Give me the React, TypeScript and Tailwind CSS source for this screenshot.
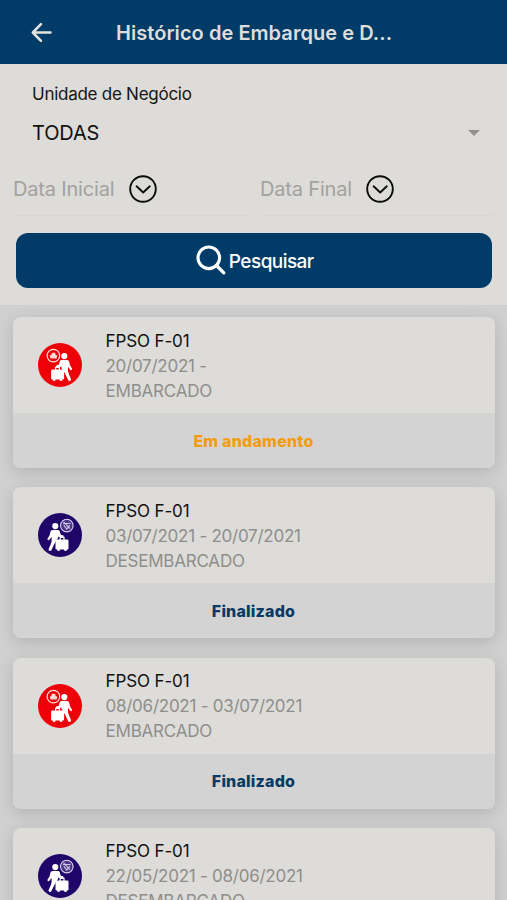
interface Trip {
  unit: string;
  period: string;
  type: 'EMBARCADO' | 'DESEMBARCADO';
  status: string;
}

const trips: Trip[] = [
  { unit: 'FPSO F-01', period: '20/07/2021 -', type: 'EMBARCADO', status: 'Em andamento' },
  { unit: 'FPSO F-01', period: '03/07/2021 - 20/07/2021', type: 'DESEMBARCADO', status: 'Finalizado' },
  { unit: 'FPSO F-01', period: '08/06/2021 - 03/07/2021', type: 'EMBARCADO', status: 'Finalizado' },
  { unit: 'FPSO F-01', period: '22/05/2021 - 08/06/2021', type: 'DESEMBARCADO', status: 'Finalizado' },
];

function Traveler() {
  return (
    <g>
      <circle cx="26.3" cy="13.1" r="3.1" fill="#fff" />
      <path
        d="M23.6 17h5.4c1.2 0 1.9.7 2.2 1.8l.9 3.7 1.9 3.1c.6 1.3-.9 2.3-1.8 1.2l-2.2-3.1v4.6l1 3.2 2 4.5c.6 1.9-2 2.8-2.9 1.1l-2.6-5.6-2.3-4.2-1.7-2.3v-1.6l-1.8.9h-2.8c-1.3 0-1.4-2 0-2.1l1.9-.4.9-3.1c.3-1 .9-1.7 1.9-1.7z"
        fill="#fff"
      />
      <path d="M17.6 27.4v-3h3.8v3" fill="none" stroke="#fff" strokeWidth="1.2" />
      <rect x="13.1" y="26.6" width="13" height="9.9" rx="1.3" fill="#fff" />
      <circle cx="16.1" cy="36.7" r="1.4" fill="#fff" />
      <circle cx="23" cy="36.7" r="1.4" fill="#fff" />
    </g>
  );
}

function TripIcon({ type }: { type: Trip['type'] }) {
  if (type === 'EMBARCADO') {
    return (
      <svg className="size-11 shrink-0" viewBox="0 0 44 44">
        <circle cx="22" cy="22" r="22" fill="#ee0009" />
        <circle cx="15.4" cy="12.6" r="6.3" fill="none" stroke="#ffe3df" strokeWidth="1.2" />
        <path d="M11.7 12.2h7.6l-.7 3.2h-6.2zM13.2 12.2l.7-2.4h3.2l.7 2.4z" fill="#ffd9d4" />
        <Traveler />
      </svg>
    );
  }

  return (
    <svg className="size-11 shrink-0" viewBox="0 0 44 44">
      <circle cx="22" cy="22" r="22" fill="#200569" />
      <circle cx="28.8" cy="12.6" r="6.3" fill="#4b3585" stroke="#ddd5f1" strokeWidth="1.1" />
      <path d="M25 10.5h7.6M25.8 12.2l3 3.9 3-3.9M25.6 8.9l6.4 6.8" fill="none" stroke="#cfc5ea" strokeWidth="1.1" />
      <g transform="matrix(-1 0 0 1 43.6 0)">
        <Traveler />
      </g>
    </svg>
  );
}

function ChevronCircle() {
  return (
    <svg className="size-7" viewBox="0 0 28 28" fill="none" stroke="#0c0c0c" strokeWidth="1.9">
      <circle cx="14" cy="14" r="12.8" />
      <path d="M7.6 11.3l6.6 6.2 6.6-6.2" strokeLinecap="round" strokeLinejoin="round" />
    </svg>
  );
}

function TripCard({ trip }: { trip: Trip }) {
  return (
    <div className="h-[151px] shrink-0 overflow-hidden rounded-lg bg-[#dddcd8] shadow-[0_4px_16px_rgba(0,0,0,0.14)]">
      <div className="flex h-24 items-center pl-[25px]">
        <TripIcon type={trip.type} />
        <div className="ml-[24px]">
          <p className="text-[17px] leading-[26px] tracking-[-0.12px] text-[#111]">{trip.unit}</p>
          <p className="text-[17px] leading-[25px] tracking-[-0.25px] text-[#8e8e8d]">{trip.period}</p>
          <p className="text-[17px] leading-[24px] tracking-[-0.22px] text-[#8e8e8d]">{trip.type}</p>
        </div>
      </div>
      <div className="flex h-[55px] items-center justify-center bg-[#d3d3d3]">
        <span
          className={`text-base font-extrabold tracking-[0.2px] ${trip.status === 'Finalizado' ? 'text-[#073b66]' : 'text-[#f39c12]'}`}
        >
          {trip.status}
        </span>
      </div>
    </div>
  );
}

export default function App() {
  return (
    <div className="flex h-[900px] w-[507px] flex-col overflow-hidden bg-[#d0d0d1] font-['Inter',sans-serif]">
      <header className="flex h-16 shrink-0 items-center bg-[#003c67] pl-[31px]">
        <svg className="size-[21px]" viewBox="0 0 20 20" fill="none" stroke="#e4e3e0" strokeWidth="2.4">
          <path d="M18.6 10H1.8M9.5 2L1.7 10l7.8 8" strokeLinecap="round" strokeLinejoin="round" />
        </svg>
        <h1 className="ml-16 whitespace-nowrap pt-px text-xl font-semibold tracking-[0.05px] text-[#dedddb]">
          Histórico de Embarque e D...
        </h1>
      </header>

      <section className="h-[241px] shrink-0 bg-[#dddcd8]">
        <div className="px-8 pt-[18px]">
          <p className="text-[17px] leading-6 tracking-[-0.26px] text-[#151515]">Unidade de Negócio</p>
          <div className="mt-[11px] flex items-center justify-between">
            <span className="text-xl leading-8 tracking-[-0.15px] text-[#111]">TODAS</span>
            <svg className="-mr-[5px] h-[6px] w-3" viewBox="0 0 12 6">
              <path d="M0 0h12L6 6z" fill="#92918f" />
            </svg>
          </div>
        </div>

        <div className="mt-[13px] flex h-[54px] px-[13px]">
          <div className="mr-3 flex w-[235px] items-center border-b border-[#d8d7d3]">
            <span className="w-[116px] text-xl tracking-[-0.18px] text-[#a3a29f]">Data Inicial</span>
            <ChevronCircle />
          </div>
          <div className="flex flex-1 items-center border-b border-[#d8d7d3]">
            <span className="w-[106px] text-xl tracking-[-0.18px] text-[#a3a29f]">Data Final</span>
            <ChevronCircle />
          </div>
        </div>

        <button className="ml-[15.5px] mt-[17px] flex h-[54.5px] w-[476.5px] items-center justify-center rounded-xl bg-[#003c67] pl-[2px] text-white">
          <svg className="size-[30px]" viewBox="0 0 30 30" fill="none" stroke="#fff">
            <circle cx="12.8" cy="12.8" r="10.8" strokeWidth="3.1" />
            <path d="M20.5 20.5l7.3 7.3" strokeWidth="3.3" strokeLinecap="round" />
          </svg>
          <span className="ml-[3px] pt-[3px] text-[19px] font-medium tracking-[-0.55px]">Pesquisar</span>
        </button>
      </section>

      <main className="flex flex-1 flex-col gap-[19.2px] overflow-hidden px-[12.5px] pt-[12.3px]">
        {trips.map((trip) => (
          <TripCard key={trip.period} trip={trip} />
        ))}
      </main>
    </div>
  );
}
